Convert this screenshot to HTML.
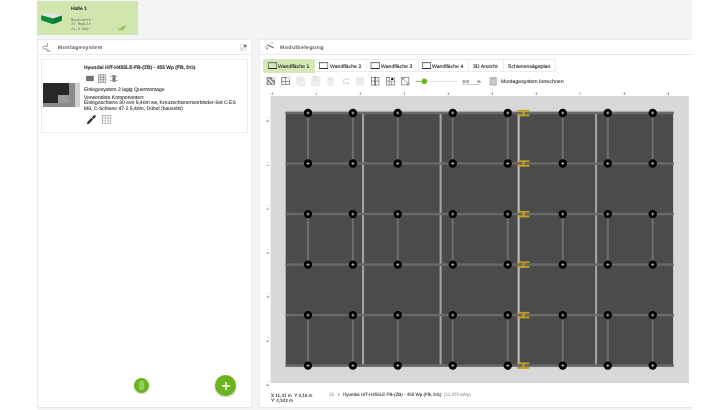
<!DOCTYPE html>
<html><head><meta charset="utf-8">
<style>
*{box-sizing:border-box;margin:0;padding:0}
html,body{width:728px;height:410px;overflow:hidden;background:#fff;font-family:"Liberation Sans",sans-serif;color:#333;text-rendering:geometricPrecision}
.abs{position:absolute}
.t{position:absolute;white-space:nowrap;line-height:1;will-change:transform;-webkit-text-stroke:0.09px currentColor}
.t.b{-webkit-text-stroke:0.1px currentColor}
</style></head><body>
<div class="abs" style="left:36.5px;top:0px;width:655.5px;height:410px;background:#f4f4f4;"></div>
<div class="abs" style="left:37px;top:1.4px;width:101px;height:33.3px;background:#d1e5ae;"></div>
<div class="abs" style="left:37px;top:39px;width:215px;height:369px;background:#fff;border:1px solid #eaeaea;"></div>
<div class="abs" style="left:259px;top:39px;width:433px;height:369px;background:#fff;border:1px solid #eaeaea;border-right:none;"></div>
<div class="abs" style="left:37.6px;top:54.2px;width:214px;height:0.9px;background:#e9e9e9;"></div>
<div class="abs" style="left:259.9px;top:54.1px;width:432px;height:0.9px;background:#e9e9e9;"></div>
<svg class="abs" style="left:41px;top:12px" width="22" height="14" viewBox="0 0 22 14">
    <polygon points="0.2,3.3 8.7,0.4 20.9,3.6 12.1,6.6" fill="#e4e4e4"/>
    <polygon points="0.2,3.3 12.1,6.6 12.1,12.3 0.2,8.2" fill="#078c3c"/>
    <polygon points="12.1,6.6 20.9,3.6 20.9,8.7 12.1,12.3" fill="#057a33"/>
  </svg>
<div class="t b" style="left:71.2px;top:8px;font-size:4.9px;color:#333;font-weight:bold;">Halle 1</div>
<div class="t" style="left:71.2px;top:20px;font-size:3.7px;color:#6a6a6a;font-family:'Liberation Mono',monospace;-webkit-text-stroke:0;">Mauerwerk</div>
<div class="t" style="left:71.2px;top:24px;font-size:3.7px;color:#6a6a6a;font-family:'Liberation Mono',monospace;-webkit-text-stroke:0;">25 Module</div>
<div class="t" style="left:71.2px;top:29px;font-size:3.7px;color:#6a6a6a;font-family:'Liberation Mono',monospace;-webkit-text-stroke:0;">11,4 kWp</div>
<svg class="abs" style="left:117px;top:24.8px" width="10" height="6" viewBox="0 0 10 6"><path d="M0.9 3.3l1.8 1.6l3.7-3.5M3.3 3.5l1.6 1.4l4-4" stroke="#86c54a" stroke-width="1.4" fill="none"/></svg>
<svg class="abs" style="left:40px;top:39px" width="14" height="14" viewBox="0 0 14 14"><path d="M7.6 3.9V7.3H3.6Q2.9 7.3 2.9 8.2V9Q2.9 9.9 3.8 9.9H7" stroke="#a0a0a0" stroke-width="1" fill="none"/><polygon points="6.6,9.4 11.4,12.5 6.6,12.5" fill="#a8a8a8"/></svg>
<div class="t b" style="left:58.4px;top:46px;font-size:5.2px;color:#6e6e6e;font-weight:bold;letter-spacing:0.42px;-webkit-text-stroke:0.1px currentColor;">Montagesystem</div>
<svg class="abs" style="left:240px;top:44px" width="8" height="8" viewBox="0 0 8 8"><rect x="0.2" y="0" width="6.8" height="6.7" fill="#dadada"/><rect x="1.1" y="0.9" width="2.5" height="2.4" fill="#fff"/><rect x="3.9" y="0.9" width="2.3" height="2.4" fill="#787878"/><rect x="3.9" y="3.6" width="2.3" height="2.3" fill="#fff"/></svg>
<div class="abs" style="left:41.3px;top:58.5px;width:206.3px;height:74px;background:transparent;border:0.8px solid #eeeeee;"></div>
<div class="abs" style="left:42.8px;top:83px;width:37.1px;height:24px;background:#d0d0d0;"></div>
<div class="abs" style="left:42.8px;top:83px;width:32.7px;height:24px;background:#8c8c8c;"></div>
<div class="abs" style="left:42.8px;top:83px;width:26.5px;height:19.8px;background:#282828;"></div>
<div class="abs" style="left:57.6px;top:95.3px;width:11.7px;height:7.5px;background:#9a9a9a;"></div>
<div class="t b" style="left:84px;top:67px;font-size:4.97px;color:#333;font-weight:bold;">Hyundai HiT-H455LE-FB-(ZB) - 455 Wp (FB, DG)</div>
<svg class="abs" style="left:84px;top:73px" width="36" height="11" viewBox="0 0 36 11">
    <rect x="2.1" y="2.8" width="7.7" height="5.3" fill="#727272"/>
    <rect x="14.5" y="1.8" width="7.2" height="7.6" fill="none" stroke="#888" stroke-width="0.75"/>
    <path d="M15 4.3h6.2M15 6.8h6.2M16.8 2v7.2M19.4 2v7.2" stroke="#666" stroke-width="0.6"/>
    <rect x="28.5" y="2" width="3" height="7" fill="#777"/>
    <path d="M26 3.5h7.6M26 7.5h7.6" stroke="#999" stroke-width="0.8"/>
  </svg>
<div class="t" style="left:84px;top:88px;font-size:5px;color:#333;">Einlegesystem 2 lagig Quermontage</div>
<div class="t" style="left:84px;top:96px;font-size:5px;color:#333;">Verwendete Komponenten:</div>
<div class="t" style="left:84px;top:101px;font-size:5px;color:#333;">Einlegeschiene 30 evo 5,40m sw, Kreuzschienenverbinder-Set C ES</div>
<div class="t" style="left:84px;top:107px;font-size:5px;color:#333;">M8, C-Schiene 47-2 5,40m, Dübel (bauseits)</div>
<svg class="abs" style="left:84px;top:112px" width="30" height="16" viewBox="0 0 30 16">
    <path d="M4.2 10.9L8.3 6.6" stroke="#333" stroke-width="2.4"/>
    <path d="M9.3 5.6L10.6 4.3" stroke="#333" stroke-width="2.4" stroke-linecap="round"/>
    <path d="M2.9 12.3l0.6-2.4l1.9 1.8z" fill="#333"/>
    <rect x="18.4" y="3.6" width="8.4" height="8" fill="none" stroke="#9a9a9a" stroke-width="0.65"/>
    <path d="M18.4 6.2h8.4M18.4 8.9h8.4M21.3 3.6v8M24.1 3.6v8" stroke="#a8a8a8" stroke-width="0.55"/>
  </svg>
<div class="abs" style="left:134px;top:377.9px;width:15.2px;height:15.2px;background:#6cb41f;border-radius:50%;box-shadow:0 0.8px 2px rgba(0,0,0,.22);"></div>
<svg class="abs" style="left:138px;top:380px" width="7" height="11" viewBox="0 0 7 11"><rect x="1.5" y="1.8" width="4.3" height="7.6" rx="0.6" fill="#8fcb55" stroke="#a8d67c" stroke-width="0.6"/><rect x="2.6" y="0.9" width="2.1" height="1.2" fill="#a8d67c"/><path d="M2.3 4.2h2.7M2.3 7.6h2.7" stroke="#b5dc8f" stroke-width="0.5"/></svg>
<div class="abs" style="left:215.1px;top:375.1px;width:21.2px;height:21.2px;background:#6cb41f;border-radius:50%;box-shadow:0 1px 2.5px rgba(0,0,0,.25);"></div>
<svg class="abs" style="left:221.8px;top:381.8px" width="8" height="8" viewBox="0 0 8 8"><path d="M0.1 4h7.8M4 0.1v7.8" stroke="#fff" stroke-width="1.3"/></svg>
<svg class="abs" style="left:260px;top:39px" width="16" height="14" viewBox="0 0 16 14"><path d="M3.9 9.2L7.6 6" stroke="#bdbdbd" stroke-width="0.7" fill="none"/><polygon points="6.6,6.3 8,5.4 13.9,8.2 13.4,9.6" fill="#7a7a7a"/><circle cx="7.1" cy="9.4" r="1.1" fill="#9a9a9a"/><circle cx="11.8" cy="4.2" r="1.2" fill="none" stroke="#cfcfcf" stroke-width="0.8"/></svg>
<div class="t b" style="left:280px;top:46px;font-size:5.2px;color:#6e6e6e;font-weight:bold;letter-spacing:0.42px;-webkit-text-stroke:0.1px currentColor;">Modulbelegung</div>
<div class="abs" style="left:263.2px;top:58.7px;width:292.4px;height:13.6px;background:transparent;border:0.7px solid #ececec;border-radius:2px;"></div>
<div class="abs" style="left:263.3px;top:59.1px;width:51.3px;height:13.5px;background:#d3e8b4;border-radius:2px 0 0 2px;"></div>
<div class="abs" style="left:366.2px;top:59.2px;width:0.7px;height:13.3px;background:#ececec;"></div>
<div class="abs" style="left:417.7px;top:59.2px;width:0.7px;height:13.3px;background:#ececec;"></div>
<div class="abs" style="left:468.4px;top:59.2px;width:0.7px;height:13.3px;background:#ececec;"></div>
<div class="abs" style="left:503.4px;top:59.2px;width:0.7px;height:13.3px;background:#ececec;"></div>
<svg class="abs" style="left:0;top:0" width="728" height="90"><rect x="268.3" y="62.6" width="8.4" height="5.9" fill="none" stroke="#555" stroke-width="0.7"/><path d="M268.1 62.7h8.8" stroke="#777" stroke-width="0.9"/><path d="M268.1 68.5h8.8" stroke="#222" stroke-width="0.9"/><rect x="319.4" y="62.6" width="8.4" height="5.9" fill="none" stroke="#555" stroke-width="0.7"/><path d="M319.2 62.7h8.8" stroke="#777" stroke-width="0.9"/><path d="M319.2 68.5h8.8" stroke="#222" stroke-width="0.9"/><rect x="371.0" y="62.6" width="8.4" height="5.9" fill="none" stroke="#555" stroke-width="0.7"/><path d="M370.8 62.7h8.8" stroke="#777" stroke-width="0.9"/><path d="M370.8 68.5h8.8" stroke="#222" stroke-width="0.9"/><rect x="422.3" y="62.6" width="8.4" height="5.9" fill="none" stroke="#555" stroke-width="0.7"/><path d="M422.1 62.7h8.8" stroke="#777" stroke-width="0.9"/><path d="M422.1 68.5h8.8" stroke="#222" stroke-width="0.9"/></svg>
<div class="t" style="left:278.3px;top:65px;font-size:5.15px;color:#222;">Wandfläche 1</div>
<div class="t" style="left:329.5px;top:65px;font-size:5.15px;color:#222;">Wandfläche 2</div>
<div class="t" style="left:381px;top:65px;font-size:5.15px;color:#222;">Wandfläche 3</div>
<div class="t" style="left:432.3px;top:65px;font-size:5.15px;color:#222;">Wandfläche 4</div>
<div class="t" style="left:473.2px;top:65px;font-size:5.15px;color:#222;">3D Ansicht</div>
<div class="t" style="left:508.2px;top:65px;font-size:5.15px;color:#222;">Schienensägeplan</div>
<svg class="abs" style="left:0;top:0" width="728" height="90">
  <rect x="266.7" y="77.1" width="8.4" height="8" rx="0.7" fill="#8c8c8c"/>
  <path d="M268.3 78.7l5.2 5.3M268.1 82.3l1.9 1.9" stroke="#fff" stroke-width="1.1"/>
  <circle cx="274.3" cy="78" r="2.3" fill="#fff"/><circle cx="274.3" cy="78" r="1.4" fill="none" stroke="#c4c4c4" stroke-width="0.7"/>
  <rect x="281.3" y="77.1" width="8.7" height="8" rx="0.7" fill="#8c8c8c"/>
  <g fill="#fff"><rect x="282.3" y="78.1" width="2.7" height="2.8"/><rect x="285.9" y="78.1" width="3.1" height="2.8"/><rect x="282.3" y="81.9" width="2.7" height="2.3"/><rect x="285.9" y="81.9" width="3.1" height="2.3"/></g>
  <circle cx="289.2" cy="78" r="2.3" fill="#fff"/><circle cx="289.2" cy="78" r="1.4" fill="none" stroke="#c4c4c4" stroke-width="0.7"/>
  <g fill="#f0f0f0" stroke="#e2e2e2" stroke-width="0.6">
    <rect x="296.7" y="76.5" width="6.2" height="8" rx="0.8"/>
    <rect x="298.4" y="78.2" width="6.5" height="8" rx="0.8"/>
    <rect x="311.8" y="76.8" width="7.9" height="9.2" rx="0.9"/>
    <rect x="327.8" y="77.5" width="5.3" height="8" rx="0.6"/>
    <rect x="356.5" y="77.2" width="7.3" height="7.8"/>
  </g>
  <rect x="313.6" y="76.6" width="3" height="1.1" fill="#c8c8c8"/>
  <path d="M299.5 80h4.2M311.9 80h7.6M328.5 79.3h3.9" stroke="#d0d0d0" stroke-width="0.6"/>
  <path d="M356.5 79.8h7.3M356.5 82.4h7.3M358.9 77.2v7.8M361.4 77.2v7.8" stroke="#e0e0e0" stroke-width="0.5" fill="none"/>
  <path d="M348.3 79h-2.9a2.1 2.1 0 0 0 0 4.4h2.9" stroke="#e4e4e4" stroke-width="1.6" fill="none"/>
  <path d="M347.2 79h1.5M347.2 83.4h1.5" stroke="#bdbdbd" stroke-width="1.2"/>
  <g stroke="#666" stroke-width="0.65" fill="none">
    <rect x="371.4" y="77.4" width="3.4" height="7.6"/>
    <rect x="375.5" y="77.4" width="3.4" height="7.6"/>
    <path d="M371.4 81.2h7.5M375.15 76.3v9.8"/>
    <rect x="386.6" y="77.4" width="7.9" height="7.6"/>
    <path d="M386.6 81.2h7.9M389.2 77.4v7.6M391.6 77.4v7.6"/>
    <rect x="401.7" y="77.3" width="7.2" height="7.6"/>
    <path d="M402.8 78.4l5 5"/>
  </g>
  <circle cx="392.3" cy="78.9" r="2.1" fill="#fff" stroke="#ddd" stroke-width="0.4"/>
  <circle cx="392.3" cy="78.9" r="1.2" fill="#111"/>
  <path d="M402.5 80.2v-2h2M408 82v2.2h-2.1" stroke="#666" stroke-width="0.55" fill="none"/>
  <rect x="415.6" y="80.9" width="9" height="0.8" fill="#6cb41f"/>
  <rect x="424.4" y="80.9" width="33" height="0.6" fill="#cfcfcf"/>
  <circle cx="424.4" cy="81.25" r="2.7" fill="#6cb41f"/>
  <rect x="462" y="84.4" width="18" height="0.5" fill="#999"/>
  <rect x="489.5" y="77" width="7.3" height="8.6" fill="#bbb"/>
  <path d="M490.5 80h5.3M490.5 82.5h5.3M493.1 80v4.8" stroke="#e8e8e8" stroke-width="0.5"/>
</svg>
<div class="t" style="left:462px;top:80px;font-size:4.2px;color:#555;">100</div>
<div class="t" style="left:476.8px;top:80px;font-size:4.0px;color:#555;">%</div>
<div class="t" style="left:500.6px;top:80px;font-size:5.2px;color:#333;">Montagesystem berechnen</div>
<svg class="abs" style="left:0;top:0;font-family:'Liberation Sans',sans-serif" width="728" height="410"><text transform="translate(272.5 95.3) scale(0.75 1)" font-size="3.7" text-anchor="middle" fill="#333">0</text><rect x="270.3" y="93.3" width="1" height="1.2" fill="#ccc"/>
<text transform="translate(316.5 95.3) scale(0.75 1)" font-size="3.7" text-anchor="middle" fill="#333">1</text><rect x="314.3" y="93.3" width="1" height="1.2" fill="#ccc"/>
<text transform="translate(360.5 95.3) scale(0.75 1)" font-size="3.7" text-anchor="middle" fill="#333">2</text><rect x="358.3" y="93.3" width="1" height="1.2" fill="#ccc"/>
<text transform="translate(404.5 95.3) scale(0.75 1)" font-size="3.7" text-anchor="middle" fill="#333">3</text><rect x="402.3" y="93.3" width="1" height="1.2" fill="#ccc"/>
<text transform="translate(448.5 95.3) scale(0.75 1)" font-size="3.7" text-anchor="middle" fill="#333">4</text><rect x="446.3" y="93.3" width="1" height="1.2" fill="#ccc"/>
<text transform="translate(492.5 95.3) scale(0.75 1)" font-size="3.7" text-anchor="middle" fill="#333">5</text><rect x="490.3" y="93.3" width="1" height="1.2" fill="#ccc"/>
<text transform="translate(536.5 95.3) scale(0.75 1)" font-size="3.7" text-anchor="middle" fill="#333">6</text><rect x="534.3" y="93.3" width="1" height="1.2" fill="#ccc"/>
<text transform="translate(580.5 95.3) scale(0.75 1)" font-size="3.7" text-anchor="middle" fill="#333">7</text><rect x="578.3" y="93.3" width="1" height="1.2" fill="#ccc"/>
<text transform="translate(624.5 95.3) scale(0.75 1)" font-size="3.7" text-anchor="middle" fill="#333">8</text><rect x="622.3" y="93.3" width="1" height="1.2" fill="#ccc"/>
<text transform="translate(668.5 95.3) scale(0.75 1)" font-size="3.7" text-anchor="middle" fill="#333">9</text><rect x="666.3" y="93.3" width="1" height="1.2" fill="#ccc"/>
<text transform="translate(269.3 121.3) rotate(-90)" font-size="3.6" text-anchor="middle" fill="#333">0</text><rect x="267.3" y="117.7" width="1.6" height="0.45" fill="#999"/>
<text transform="translate(269.3 165.3) rotate(-90)" font-size="3.6" text-anchor="middle" fill="#333">1</text><rect x="267.3" y="161.7" width="1.6" height="0.45" fill="#999"/>
<text transform="translate(269.3 209.3) rotate(-90)" font-size="3.6" text-anchor="middle" fill="#333">2</text><rect x="267.3" y="205.7" width="1.6" height="0.45" fill="#999"/>
<text transform="translate(269.3 253.3) rotate(-90)" font-size="3.6" text-anchor="middle" fill="#333">3</text><rect x="267.3" y="249.7" width="1.6" height="0.45" fill="#999"/>
<text transform="translate(269.3 297.3) rotate(-90)" font-size="3.6" text-anchor="middle" fill="#333">4</text><rect x="267.3" y="293.7" width="1.6" height="0.45" fill="#999"/>
<text transform="translate(269.3 341.3) rotate(-90)" font-size="3.6" text-anchor="middle" fill="#333">5</text><rect x="267.3" y="337.7" width="1.6" height="0.45" fill="#999"/>
<text transform="translate(269.3 385.3) rotate(-90)" font-size="3.6" text-anchor="middle" fill="#333">6</text><rect x="267.3" y="381.7" width="1.6" height="0.45" fill="#999"/>
<rect x="270.6" y="96.1" width="418.4" height="287" fill="#d8d8d8"/>
<rect x="285.7" y="111.8" width="387.4" height="254.7" fill="#4b4b4b"/>
<rect x="362.00" y="114" width="2.1" height="250.6" fill="#a2a2a2"/>
<rect x="439.60" y="114" width="2.1" height="250.6" fill="#a2a2a2"/>
<rect x="517.60" y="114" width="2.1" height="250.6" fill="#bcbcbc"/>
<rect x="595.00" y="114" width="2.1" height="250.6" fill="#a2a2a2"/>
<rect x="306.95" y="113.0" width="2.1" height="50.50" fill="#6e6e6e"/>
<rect x="306.95" y="214.1" width="2.1" height="50.50" fill="#6e6e6e"/>
<rect x="306.95" y="315.1" width="2.1" height="50.50" fill="#6e6e6e"/>
<rect x="351.85" y="113.0" width="2.1" height="50.50" fill="#6e6e6e"/>
<rect x="351.85" y="214.1" width="2.1" height="50.50" fill="#6e6e6e"/>
<rect x="351.85" y="315.1" width="2.1" height="50.50" fill="#6e6e6e"/>
<rect x="396.70" y="113.0" width="2.1" height="50.50" fill="#6e6e6e"/>
<rect x="396.70" y="214.1" width="2.1" height="50.50" fill="#6e6e6e"/>
<rect x="396.70" y="315.1" width="2.1" height="50.50" fill="#6e6e6e"/>
<rect x="451.70" y="113.0" width="2.1" height="50.50" fill="#6e6e6e"/>
<rect x="451.70" y="214.1" width="2.1" height="50.50" fill="#6e6e6e"/>
<rect x="451.70" y="315.1" width="2.1" height="50.50" fill="#6e6e6e"/>
<rect x="506.70" y="113.0" width="2.1" height="50.50" fill="#6e6e6e"/>
<rect x="506.70" y="214.1" width="2.1" height="50.50" fill="#6e6e6e"/>
<rect x="506.70" y="315.1" width="2.1" height="50.50" fill="#6e6e6e"/>
<rect x="561.70" y="113.0" width="2.1" height="50.50" fill="#6e6e6e"/>
<rect x="561.70" y="214.1" width="2.1" height="50.50" fill="#6e6e6e"/>
<rect x="561.70" y="315.1" width="2.1" height="50.50" fill="#6e6e6e"/>
<rect x="606.75" y="113.0" width="2.1" height="50.50" fill="#6e6e6e"/>
<rect x="606.75" y="214.1" width="2.1" height="50.50" fill="#6e6e6e"/>
<rect x="606.75" y="315.1" width="2.1" height="50.50" fill="#6e6e6e"/>
<rect x="651.65" y="113.0" width="2.1" height="50.50" fill="#6e6e6e"/>
<rect x="651.65" y="214.1" width="2.1" height="50.50" fill="#6e6e6e"/>
<rect x="651.65" y="315.1" width="2.1" height="50.50" fill="#6e6e6e"/>
<rect x="285.6" y="111.80" width="388.3" height="2.4" fill="#6a6a6a"/>
<rect x="285.6" y="162.30" width="388.3" height="2.4" fill="#6a6a6a"/>
<rect x="285.6" y="212.90" width="388.3" height="2.4" fill="#6a6a6a"/>
<rect x="285.6" y="263.40" width="388.3" height="2.4" fill="#6a6a6a"/>
<rect x="285.6" y="313.90" width="388.3" height="2.4" fill="#6a6a6a"/>
<rect x="285.6" y="364.40" width="388.3" height="2.4" fill="#6a6a6a"/>
<g fill="#c2a020"><rect x="517.4" y="109.80" width="12" height="1.7"/><rect x="517.4" y="114.40" width="12" height="1.9"/><rect x="522.5" y="111.00" width="2" height="4"/></g>
<g fill="#c2a020"><rect x="517.4" y="160.30" width="12" height="1.7"/><rect x="517.4" y="164.90" width="12" height="1.9"/><rect x="522.5" y="161.50" width="2" height="4"/></g>
<g fill="#c2a020"><rect x="517.4" y="210.90" width="12" height="1.7"/><rect x="517.4" y="215.50" width="12" height="1.9"/><rect x="522.5" y="212.10" width="2" height="4"/></g>
<g fill="#c2a020"><rect x="517.4" y="261.40" width="12" height="1.7"/><rect x="517.4" y="266.00" width="12" height="1.9"/><rect x="522.5" y="262.60" width="2" height="4"/></g>
<g fill="#c2a020"><rect x="517.4" y="311.90" width="12" height="1.7"/><rect x="517.4" y="316.50" width="12" height="1.9"/><rect x="522.5" y="313.10" width="2" height="4"/></g>
<g fill="#c2a020"><rect x="517.4" y="362.40" width="12" height="1.7"/><rect x="517.4" y="367.00" width="12" height="1.9"/><rect x="522.5" y="363.60" width="2" height="4"/></g>
<circle cx="308" cy="113.0" r="4.2" fill="#000"/><path d="M306.50 113.0h3M308 111.50v3" stroke="#f0f0f0" stroke-width="0.65"/>
<circle cx="352.9" cy="113.0" r="4.2" fill="#000"/><path d="M351.40 113.0h3M352.9 111.50v3" stroke="#f0f0f0" stroke-width="0.65"/>
<circle cx="397.75" cy="113.0" r="4.2" fill="#000"/><path d="M396.25 113.0h3M397.75 111.50v3" stroke="#f0f0f0" stroke-width="0.65"/>
<circle cx="452.75" cy="113.0" r="4.2" fill="#000"/><path d="M451.25 113.0h3M452.75 111.50v3" stroke="#f0f0f0" stroke-width="0.65"/>
<circle cx="507.75" cy="113.0" r="4.2" fill="#000"/><path d="M506.25 113.0h3M507.75 111.50v3" stroke="#f0f0f0" stroke-width="0.65"/>
<circle cx="562.75" cy="113.0" r="4.2" fill="#000"/><path d="M561.25 113.0h3M562.75 111.50v3" stroke="#f0f0f0" stroke-width="0.65"/>
<circle cx="607.8" cy="113.0" r="4.2" fill="#000"/><path d="M606.30 113.0h3M607.8 111.50v3" stroke="#f0f0f0" stroke-width="0.65"/>
<circle cx="652.7" cy="113.0" r="4.2" fill="#000"/><path d="M651.20 113.0h3M652.7 111.50v3" stroke="#f0f0f0" stroke-width="0.65"/>
<circle cx="308" cy="163.5" r="4.2" fill="#000"/><path d="M306.50 163.5h3M308 162.00v3" stroke="#f0f0f0" stroke-width="0.65"/>
<circle cx="352.9" cy="163.5" r="4.2" fill="#000"/><path d="M351.40 163.5h3M352.9 162.00v3" stroke="#f0f0f0" stroke-width="0.65"/>
<circle cx="397.75" cy="163.5" r="4.2" fill="#000"/><path d="M396.25 163.5h3M397.75 162.00v3" stroke="#f0f0f0" stroke-width="0.65"/>
<circle cx="452.75" cy="163.5" r="4.2" fill="#000"/><path d="M451.25 163.5h3M452.75 162.00v3" stroke="#f0f0f0" stroke-width="0.65"/>
<circle cx="507.75" cy="163.5" r="4.2" fill="#000"/><path d="M506.25 163.5h3M507.75 162.00v3" stroke="#f0f0f0" stroke-width="0.65"/>
<circle cx="562.75" cy="163.5" r="4.2" fill="#000"/><path d="M561.25 163.5h3M562.75 162.00v3" stroke="#f0f0f0" stroke-width="0.65"/>
<circle cx="607.8" cy="163.5" r="4.2" fill="#000"/><path d="M606.30 163.5h3M607.8 162.00v3" stroke="#f0f0f0" stroke-width="0.65"/>
<circle cx="652.7" cy="163.5" r="4.2" fill="#000"/><path d="M651.20 163.5h3M652.7 162.00v3" stroke="#f0f0f0" stroke-width="0.65"/>
<circle cx="308" cy="214.1" r="4.2" fill="#000"/><path d="M306.50 214.1h3M308 212.60v3" stroke="#f0f0f0" stroke-width="0.65"/>
<circle cx="352.9" cy="214.1" r="4.2" fill="#000"/><path d="M351.40 214.1h3M352.9 212.60v3" stroke="#f0f0f0" stroke-width="0.65"/>
<circle cx="397.75" cy="214.1" r="4.2" fill="#000"/><path d="M396.25 214.1h3M397.75 212.60v3" stroke="#f0f0f0" stroke-width="0.65"/>
<circle cx="452.75" cy="214.1" r="4.2" fill="#000"/><path d="M451.25 214.1h3M452.75 212.60v3" stroke="#f0f0f0" stroke-width="0.65"/>
<circle cx="507.75" cy="214.1" r="4.2" fill="#000"/><path d="M506.25 214.1h3M507.75 212.60v3" stroke="#f0f0f0" stroke-width="0.65"/>
<circle cx="562.75" cy="214.1" r="4.2" fill="#000"/><path d="M561.25 214.1h3M562.75 212.60v3" stroke="#f0f0f0" stroke-width="0.65"/>
<circle cx="607.8" cy="214.1" r="4.2" fill="#000"/><path d="M606.30 214.1h3M607.8 212.60v3" stroke="#f0f0f0" stroke-width="0.65"/>
<circle cx="652.7" cy="214.1" r="4.2" fill="#000"/><path d="M651.20 214.1h3M652.7 212.60v3" stroke="#f0f0f0" stroke-width="0.65"/>
<circle cx="308" cy="264.6" r="4.2" fill="#000"/><path d="M306.50 264.6h3M308 263.10v3" stroke="#f0f0f0" stroke-width="0.65"/>
<circle cx="352.9" cy="264.6" r="4.2" fill="#000"/><path d="M351.40 264.6h3M352.9 263.10v3" stroke="#f0f0f0" stroke-width="0.65"/>
<circle cx="397.75" cy="264.6" r="4.2" fill="#000"/><path d="M396.25 264.6h3M397.75 263.10v3" stroke="#f0f0f0" stroke-width="0.65"/>
<circle cx="452.75" cy="264.6" r="4.2" fill="#000"/><path d="M451.25 264.6h3M452.75 263.10v3" stroke="#f0f0f0" stroke-width="0.65"/>
<circle cx="507.75" cy="264.6" r="4.2" fill="#000"/><path d="M506.25 264.6h3M507.75 263.10v3" stroke="#f0f0f0" stroke-width="0.65"/>
<circle cx="562.75" cy="264.6" r="4.2" fill="#000"/><path d="M561.25 264.6h3M562.75 263.10v3" stroke="#f0f0f0" stroke-width="0.65"/>
<circle cx="607.8" cy="264.6" r="4.2" fill="#000"/><path d="M606.30 264.6h3M607.8 263.10v3" stroke="#f0f0f0" stroke-width="0.65"/>
<circle cx="652.7" cy="264.6" r="4.2" fill="#000"/><path d="M651.20 264.6h3M652.7 263.10v3" stroke="#f0f0f0" stroke-width="0.65"/>
<circle cx="308" cy="315.1" r="4.2" fill="#000"/><path d="M306.50 315.1h3M308 313.60v3" stroke="#f0f0f0" stroke-width="0.65"/>
<circle cx="352.9" cy="315.1" r="4.2" fill="#000"/><path d="M351.40 315.1h3M352.9 313.60v3" stroke="#f0f0f0" stroke-width="0.65"/>
<circle cx="397.75" cy="315.1" r="4.2" fill="#000"/><path d="M396.25 315.1h3M397.75 313.60v3" stroke="#f0f0f0" stroke-width="0.65"/>
<circle cx="452.75" cy="315.1" r="4.2" fill="#000"/><path d="M451.25 315.1h3M452.75 313.60v3" stroke="#f0f0f0" stroke-width="0.65"/>
<circle cx="507.75" cy="315.1" r="4.2" fill="#000"/><path d="M506.25 315.1h3M507.75 313.60v3" stroke="#f0f0f0" stroke-width="0.65"/>
<circle cx="562.75" cy="315.1" r="4.2" fill="#000"/><path d="M561.25 315.1h3M562.75 313.60v3" stroke="#f0f0f0" stroke-width="0.65"/>
<circle cx="607.8" cy="315.1" r="4.2" fill="#000"/><path d="M606.30 315.1h3M607.8 313.60v3" stroke="#f0f0f0" stroke-width="0.65"/>
<circle cx="652.7" cy="315.1" r="4.2" fill="#000"/><path d="M651.20 315.1h3M652.7 313.60v3" stroke="#f0f0f0" stroke-width="0.65"/>
<circle cx="308" cy="365.6" r="4.2" fill="#000"/><path d="M306.50 365.6h3M308 364.10v3" stroke="#f0f0f0" stroke-width="0.65"/>
<circle cx="352.9" cy="365.6" r="4.2" fill="#000"/><path d="M351.40 365.6h3M352.9 364.10v3" stroke="#f0f0f0" stroke-width="0.65"/>
<circle cx="397.75" cy="365.6" r="4.2" fill="#000"/><path d="M396.25 365.6h3M397.75 364.10v3" stroke="#f0f0f0" stroke-width="0.65"/>
<circle cx="452.75" cy="365.6" r="4.2" fill="#000"/><path d="M451.25 365.6h3M452.75 364.10v3" stroke="#f0f0f0" stroke-width="0.65"/>
<circle cx="507.75" cy="365.6" r="4.2" fill="#000"/><path d="M506.25 365.6h3M507.75 364.10v3" stroke="#f0f0f0" stroke-width="0.65"/>
<circle cx="562.75" cy="365.6" r="4.2" fill="#000"/><path d="M561.25 365.6h3M562.75 364.10v3" stroke="#f0f0f0" stroke-width="0.65"/>
<circle cx="607.8" cy="365.6" r="4.2" fill="#000"/><path d="M606.30 365.6h3M607.8 364.10v3" stroke="#f0f0f0" stroke-width="0.65"/>
<circle cx="652.7" cy="365.6" r="4.2" fill="#000"/><path d="M651.20 365.6h3M652.7 364.10v3" stroke="#f0f0f0" stroke-width="0.65"/></svg>
<div class="t" style="left:271px;top:392.9px;font-size:4.6px;color:#333;line-height:5px;">X 11,41 m &nbsp;Y 2,16 m<br>Y' 4,342 m</div>
<div class="t" style="left:329.4px;top:393.0px;font-size:4.5px;color:#999;">25 &nbsp;&nbsp;x</div>
<div class="t" style="left:343px;top:393.0px;font-size:4.5px;color:#333;">Hyundai HiT-H455LE-FB-(ZB) - 455 Wp (FB, DG)</div>
<div class="t" style="left:444.4px;top:393.0px;font-size:4.5px;color:#999;">(11,375 kWp)</div>
</body></html>
